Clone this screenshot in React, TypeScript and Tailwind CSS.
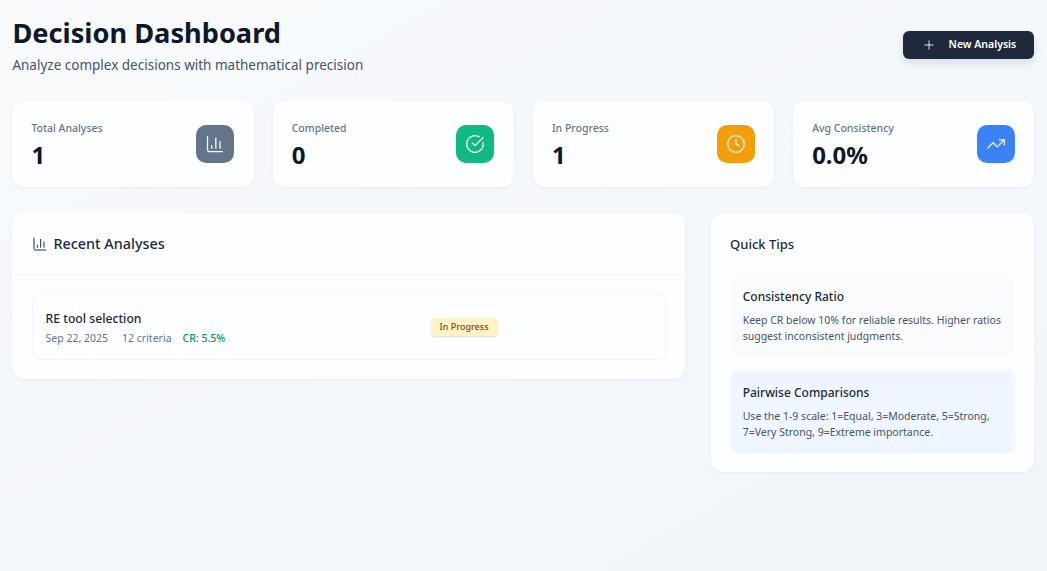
import { BarChart3, CircleCheckBig, Clock, Plus, TrendingUp } from 'lucide-react';
import type { ComponentType } from 'react';

type Stat = {
  label: string;
  value: string;
  color: string;
  icon: ComponentType<{ size?: number; strokeWidth?: number; className?: string }>;
};

const stats: Stat[] = [
  { label: 'Total Analyses', value: '1', color: 'bg-[#64748b]', icon: BarChart3 },
  { label: 'Completed', value: '0', color: 'bg-[#10b981]', icon: CircleCheckBig },
  { label: 'In Progress', value: '1', color: 'bg-[#f59e0b]', icon: Clock },
  { label: 'Avg Consistency', value: '0.0%', color: 'bg-[#3b82f6]', icon: TrendingUp },
];

const cardShadow = 'shadow-[0_1px_3px_rgba(15,23,42,0.06)]';

function StatCard({ stat }: { stat: Stat }) {
  const Icon = stat.icon;
  return (
    <div className={`h-[86px] rounded-xl bg-[#fdfeff] ${cardShadow} pl-[19px] pr-[19.5px] flex items-center justify-between`}>
      <div className="pt-[4px]">
        <div className="text-[10.5px] leading-[15px] font-medium text-[#64748b]">{stat.label}</div>
        <div className="mt-[3px] text-2xl leading-[32px] font-bold text-[#0f172a]">{stat.value}</div>
      </div>
      <div className={`w-[38px] h-[38px] rounded-[10px] flex items-center justify-center text-white ${stat.color}`}>
        <Icon size={20} strokeWidth={1.5} />
      </div>
    </div>
  );
}

function Tip({ title, body, color }: { title: string; body: string; color: string }) {
  return (
    <div className={`h-[83px] rounded-lg pl-[12.6px] pr-[13px] pt-[13px] ${color}`}>
      <div className="text-[12px] leading-[20px] font-medium text-[#1e293b]">{title}</div>
      <p className="mt-[5px] text-[10.5px] leading-4 text-[#475569]">{body}</p>
    </div>
  );
}

export default function App() {
  return (
    <div className="min-h-[571px] bg-gradient-to-br from-[#f8fafc] to-[#f1f5f9] pl-[12.4px] pr-[12.6px] pt-[12px] font-['Noto_Sans',sans-serif]">
      {/* header */}
      <div className="flex items-start justify-between">
        <div>
          <h1 className="text-[27.2px] leading-[42px] font-bold text-[#0f172a]">Decision Dashboard</h1>
          <p className="mt-[1px] text-[13.5px] leading-[20px] text-[#475569]">Analyze complex decisions with mathematical precision</p>
        </div>
        <button className="mt-[19px] h-[28px] w-[131px] rounded-md bg-[#1e293b] text-white text-[10.5px] font-semibold flex items-center justify-center gap-[13px] shadow-[0_4px_8px_rgba(15,23,42,0.12)]">
          <Plus size={14} strokeWidth={1.5} />
          New Analysis
        </button>
      </div>

      {/* stats */}
      <div className="mt-[26px] grid grid-cols-4 gap-[19px]">
        {stats.map(s => (
          <StatCard key={s.label} stat={s} />
        ))}
      </div>

      {/* main */}
      <div className="mt-[26px] grid grid-cols-[1fr_323px] gap-[26px] items-start">
        <div className={`rounded-xl bg-[#fdfeff] ${cardShadow}`}>
          <div className="h-[62px] border-b border-[#f1f5f9] px-[20px] flex items-center gap-[5px]">
            <BarChart3 size={16} strokeWidth={1.5} className="text-[#1e293b]" />
            <h2 className="text-[14.4px] font-medium text-[#1e293b]">Recent Analyses</h2>
          </div>
          <div className="px-[19.6px] py-[19px]">
            <div className="h-[66px] rounded-lg border border-[#f1f5f9] pl-[12.6px] flex items-center">
              <div className="w-[385px] pt-px">
                <div className="text-[12.2px] leading-[20px] font-medium text-[#1e293b]">RE tool selection</div>
                <div className="mt-px flex gap-[13px] text-[10.5px] leading-4 text-[#64748b]">
                  <span className="mr-px">Sep 22, 2025</span>
                  <span className="-mr-[2px]">12 criteria</span>
                  <span className="font-medium text-[#059669]">CR: 5.5%</span>
                </div>
              </div>
              <span className="h-[18px] w-[67px] rounded bg-[#fef3c7] text-[#92400e] text-[9px] font-medium flex items-center justify-center shadow-[0_1px_2px_rgba(15,23,42,0.15)]">
                In Progress
              </span>
            </div>
          </div>
        </div>

        <div className={`rounded-xl bg-[#fdfeff] ${cardShadow} pl-[18.7px] pr-[19.3px] py-[19px]`}>
          <h3 className="text-[13px] leading-[24px] font-medium text-[#1e293b]">Quick Tips</h3>
          <div className="mt-[18px] flex flex-col gap-[13px]">
            <Tip
              title="Consistency Ratio"
              body="Keep CR below 10% for reliable results. Higher ratios suggest inconsistent judgments."
              color="bg-[#fafbfc]"
            />
            <Tip
              title="Pairwise Comparisons"
              body="Use the 1-9 scale: 1=Equal, 3=Moderate, 5=Strong, 7=Very Strong, 9=Extreme importance."
              color="bg-[#eff6ff]"
            />
          </div>
        </div>
      </div>
    </div>
  );
}
